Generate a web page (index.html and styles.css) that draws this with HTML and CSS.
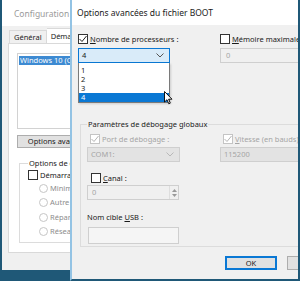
FILE: index.html
```html
<!DOCTYPE html>
<html lang="fr">
<head>
    <meta charset="UTF-8">
    <meta name="viewport" content="width=device-width, initial-scale=1.0">
    <title>Options avancées du fichier BOOT</title>
    <link rel="stylesheet" href="styles.css">
</head>
<body>
    <div class="desktop">
        <!-- Fenêtre d'arrière-plan : Configuration du système -->
        <div class="window msconfig">
            <div class="win-title">
                <svg class="app-icon" width="9" height="9" viewBox="0 0 9 9">
                    <rect x="0.5" y="0.5" width="8" height="6" fill="#9fb7cc" stroke="#5d7a96"/>
                    <rect x="2" y="2" width="5" height="3" fill="#dbe8f3"/>
                    <rect x="3" y="7" width="3" height="1.5" fill="#5d7a96"/>
                </svg>
                <span>Configuration du système</span>
            </div>
            <div class="win-body">
                <div class="tabs">
                    <div class="tab">Général</div>
                    <div class="tab active">Démarrage</div>
                </div>
                <div class="tab-panel">
                    <div class="listbox">
                        <div class="list-item selected">Windows 10 (C:\Windows)</div>
                    </div>
                    <div class="btn btn-wide">Options avancées...</div>
                    <fieldset class="group boot-group">
                        <legend>Options de démarrage</legend>
                        <label class="chk-line">
                            <span class="chk"></span>
                            <span>Démarrage sécurisé</span>
                        </label>
                        <div class="radios">
                            <div class="radio-line"><span class="radio"></span>Minimal</div>
                            <div class="radio-line"><span class="radio"></span>Autre environnement</div>
                            <div class="radio-line"><span class="radio"></span>Réparation AD</div>
                            <div class="radio-line"><span class="radio"></span>Réseau</div>
                        </div>
                    </fieldset>
                </div>
            </div>
        </div>

        <!-- Boîte de dialogue au premier plan -->
        <div class="window dialog">
            <div class="dlg-title">Options avancées du fichier BOOT</div>
            <div class="dlg-body">
                <div class="top-row">
                    <div class="col col-proc">
                        <label class="chk-line">
                            <span class="chk checked">
                                <svg width="10" height="10" viewBox="0 0 10 10"><path d="M1.5 5 L4 7.5 L8.5 2" fill="none" stroke="#222" stroke-width="1"/></svg>
                            </span>
                            <span><u>N</u>ombre de processeurs :</span>
                        </label>
                        <div class="combo open">
                            <span>4</span>
                            <svg class="chev" width="8" height="5" viewBox="0 0 8 5"><path d="M0.5 0.5 L4 4 L7.5 0.5" fill="none" stroke="#555" stroke-width="1"/></svg>
                        </div>
                        <div class="dropdown">
                            <div class="dd-item">1</div>
                            <div class="dd-item">2</div>
                            <div class="dd-item">3</div>
                            <div class="dd-item selected">4</div>
                        </div>
                    </div>
                    <div class="col col-mem">
                        <label class="chk-line">
                            <span class="chk"></span>
                            <span><u>M</u>émoire maximale :</span>
                        </label>
                        <div class="field disabled">0</div>
                    </div>
                </div>

                <fieldset class="group debug-group">
                    <legend>Paramètres de débogage globaux</legend>
                    <div class="debug-row">
                        <div class="dcol">
                            <label class="chk-line dim">
                                <span class="chk checked dim">
                                    <svg width="10" height="10" viewBox="0 0 10 10"><path d="M1.5 5 L4 7.5 L8.5 2" fill="none" stroke="#b5b5b5" stroke-width="1"/></svg>
                                </span>
                                <span>Port de débo<u>g</u>age :</span>
                            </label>
                            <div class="combo disabled">
                                <span>COM1:</span>
                                <svg class="chev" width="8" height="5" viewBox="0 0 8 5"><path d="M0.5 0.5 L4 4 L7.5 0.5" fill="none" stroke="#b8b8b8" stroke-width="1"/></svg>
                            </div>
                        </div>
                        <div class="dcol dcol-right">
                            <label class="chk-line dim">
                                <span class="chk checked dim">
                                    <svg width="10" height="10" viewBox="0 0 10 10"><path d="M1.5 5 L4 7.5 L8.5 2" fill="none" stroke="#b5b5b5" stroke-width="1"/></svg>
                                </span>
                                <span><u>V</u>itesse (en bauds)</span>
                            </label>
                            <div class="combo disabled">
                                <span>115200</span>
                            </div>
                        </div>
                    </div>
                    <label class="chk-line canal">
                        <span class="chk"></span>
                        <span><u>C</u>anal :</span>
                    </label>
                    <div class="spin">
                        <span>0</span>
                        <div class="spin-btns">
                            <svg width="5" height="3" viewBox="0 0 5 3"><path d="M0 3 L2.5 0 L5 3 Z" fill="#999"/></svg>
                            <svg width="5" height="3" viewBox="0 0 5 3"><path d="M0 0 L2.5 3 L5 0 Z" fill="#999"/></svg>
                        </div>
                    </div>
                    <div class="usb-label">Nom cible <u>U</u>SB :</div>
                    <div class="field usb"></div>
                </fieldset>

                <div class="buttons">
                    <div class="btn btn-ok">OK</div>
                    <div class="btn btn-cancel">Annuler</div>
                </div>
            </div>
        </div>

        <svg class="cursor" width="9" height="14" viewBox="0 0 9 14">
            <path d="M0.5 0.5 L0.5 11 L3 8.7 L4.8 12.8 L6.3 12.1 L4.6 8.2 L8 8.2 Z" fill="#fff" stroke="#000" stroke-width="0.9" stroke-linejoin="round"/>
        </svg>
    </div>
</body>
</html>
```

FILE: styles.css
```css
* {
    margin: 0;
    padding: 0;
    box-sizing: border-box;
}

body {
    width: 300px;
    height: 281px;
    overflow: hidden;
    font-family: "Noto Sans", "Open Sans", sans-serif;
    font-size: 7.5px;
    line-height: 9px;
    color: #1a1a1a;
}

.desktop {
    position: relative;
    width: 300px;
    height: 281px;
    background: #1f5877;
    overflow: hidden;
}

.window {
    position: absolute;
    top: 0;
    overflow: hidden;
}

u {
    text-decoration: underline;
    text-underline-offset: 1px;
}

/* ---------- background window ---------- */

.msconfig {
    left: 2px;
    width: 70px;
    height: 270px;
    background: #f0f0f0;
}

.win-title {
    height: 26px;
    background: #fff;
    display: flex;
    align-items: center;
    gap: 7px;
    padding-left: 5px;
    color: #9a9a9a;
    font-size: 8.5px;
    white-space: nowrap;
}

.win-body {
    padding: 2px 0 0 6px;
}

.tabs {
    display: flex;
    align-items: flex-end;
    height: 15px;
    padding-left: 1px;
}

.tab {
    height: 13px;
    padding: 0 4px;
    border: 1px solid #d9d9d9;
    border-bottom: none;
    background: #f0f0f0;
    line-height: 12px;
    white-space: nowrap;
}

.tab.active {
    height: 15px;
    background: #fff;
    line-height: 14px;
    border-left: none;
}

.tab-panel {
    width: 100px;
    height: 210px;
    background: #fff;
    border: 1px solid #d9d9d9;
    padding: 9px 0 0 8px;
}

.listbox {
    height: 76px;
    border: 1px solid #d2d2d2;
    padding: 2px 0 0 1px;
}

.list-item {
    height: 9px;
    line-height: 9px;
    padding-left: 1px;
    white-space: nowrap;
    overflow: hidden;
}

.list-item.selected {
    background: #3d8ad2;
    color: #fff;
}

.btn {
    height: 13px;
    background: #e1e1e1;
    border: 1px solid #adadad;
    line-height: 11px;
    text-align: center;
    white-space: nowrap;
    overflow: hidden;
}

.btn-wide {
    width: 90px;
    margin-top: 6px;
}

.group {
    border: 1px solid #dcdcdc;
    border-right: none;
}

.group legend {
    padding: 0 1px;
    line-height: 9px;
    white-space: nowrap;
}

.boot-group {
    margin: 11px 0 0 2px;
    height: 84px;
    padding: 1px 0 0 8px;
}

.chk-line {
    display: flex;
    align-items: center;
    gap: 2px;
    height: 12px;
    white-space: nowrap;
}

.chk {
    width: 10px;
    height: 10px;
    border: 1px solid #333;
    background: #fff;
    flex: none;
    display: flex;
    align-items: center;
    justify-content: center;
}

.chk svg {
    margin: -1px;
}

.chk.dim {
    border-color: #c4c4c4;
}

.radios {
    padding: 2px 0 0 11px;
    display: flex;
    flex-direction: column;
    gap: 4.5px;
    color: #8d8d8d;
}

.radio-line {
    display: flex;
    align-items: center;
    gap: 2px;
    height: 10px;
    white-space: nowrap;
}

.radio {
    width: 9px;
    height: 9px;
    border: 1px solid #c6c6c6;
    border-radius: 50%;
    background: #fff;
    flex: none;
}

/* ---------- dialog ---------- */

.dialog {
    left: 70px;
    width: 230px;
    height: 281px;
    background: #f0f0f0;
    border-left: 2px solid #93c3e4;
    border-right: 2px solid #1f5877;
    border-bottom: 2px solid #1f5877;
}

.dlg-title {
    height: 25px;
    background: #fff;
    padding-left: 5px;
    line-height: 26px;
    font-size: 8.5px;
}

.dlg-body {
    padding: 8px 0 0 6px;
}

.top-row {
    display: flex;
    gap: 50px;
}

.col {
    position: relative;
    display: flex;
    flex-direction: column;
    gap: 3px;
}

.col-proc {
    width: 92px;
    flex: none;
}

.col-mem {
    flex: 1;
}

.combo {
    height: 15px;
    display: flex;
    align-items: center;
    justify-content: space-between;
    padding: 0 5px 0 3px;
    border: 1px solid #adadad;
    background: #e5e5e5;
}

.combo.open {
    border-color: #0a78d4;
    background: #d9ebf9;
}

.combo.disabled {
    border-color: #cfcfcf;
    background: #e3e3e3;
    color: #a5a5a5;
}

.dropdown {
    position: absolute;
    top: 30px;
    left: 0;
    width: 92px;
    height: 40px;
    background: #fff;
    border: 1px solid #7a7a7a;
    border-top: none;
    padding-top: 3px;
    box-shadow: 1px 1px 2px rgba(0, 0, 0, 0.15);
}

.dd-item {
    height: 9px;
    line-height: 9px;
    padding-left: 2px;
}

.dd-item.selected {
    background: #0a78d4;
    color: #fff;
}

.field {
    height: 15px;
    border: 1px solid #cfcfcf;
    background: #fff;
    padding-left: 5px;
    line-height: 13px;
}

.field.disabled {
    background: #f0f0f0;
    color: #a5a5a5;
}

.debug-group {
    margin: 57px 0 0 2px;
    height: 127px;
    padding: 4px 0 0 6px;
}

.debug-row {
    display: flex;
    gap: 40px;
}

.dcol {
    width: 93px;
    flex: none;
    display: flex;
    flex-direction: column;
    gap: 2px;
}

.dcol-right {
    flex: 1;
}

.dim {
    color: #a5a5a5;
}

.debug-row .chk-line {
    padding-left: 3px;
}

.canal {
    margin-top: 10px;
    padding-left: 4px;
}

.spin {
    width: 92px;
    height: 15px;
    margin-top: 1px;
    border: 1px solid #cfcfcf;
    background: #f0f0f0;
    color: #a5a5a5;
    display: flex;
    align-items: center;
    justify-content: space-between;
    padding-left: 4px;
}

.spin-btns {
    width: 9px;
    height: 13px;
    border-left: 1px solid #dedede;
    display: flex;
    flex-direction: column;
    align-items: center;
    justify-content: center;
    gap: 2px;
}

.usb-label {
    margin-top: 13px;
    line-height: 9px;
}

.field.usb {
    width: 91px;
    height: 17px;
    margin: 5px 0 0 1px;
    background: #f5f5f5;
}

.buttons {
    display: flex;
    gap: 10px;
    margin: 9px 0 0 147px;
}

.buttons .btn {
    width: 52px;
    height: 14px;
    flex: none;
    line-height: 12px;
}

.btn-ok {
    border-color: #0a78d4;
    box-shadow: inset 0 0 0 1px #0a78d4;
}

.cursor {
    position: absolute;
    left: 164px;
    top: 91px;
}
```
